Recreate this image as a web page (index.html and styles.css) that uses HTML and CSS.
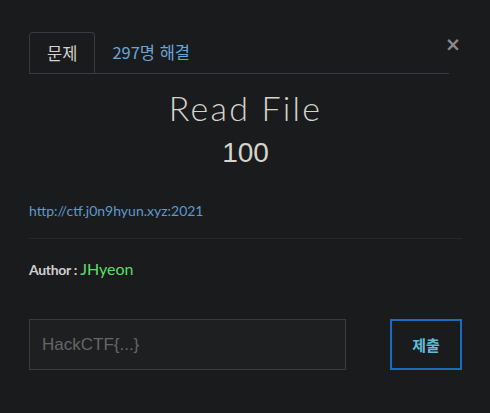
FILE: index.html
```html
<!DOCTYPE html>
<html lang="ko">
<head>
  <meta charset="UTF-8">
  <title>Read File</title>
  <link rel="stylesheet" href="styles.css">
</head>
<body>
  <div class="modal">
    <button class="close" type="button">&times;</button>
    <div class="tabs">
      <div class="tab active">문제</div>
      <div class="tab solves">297명 해결</div>
    </div>
    <h2 class="title">Read File</h2>
    <h3 class="value">100</h3>
    <div class="desc">
      <a href="#" class="link">http://ctf.j0n9hyun.xyz:2021</a>
    </div>
    <hr class="line">
    <div class="author">Author : <span class="name">JHyeon</span></div>
    <form class="submit-row">
      <input class="flag" type="text" placeholder="HackCTF{...}">
      <button class="btn" type="button">제출</button>
    </form>
  </div>
</body>
</html>
```

FILE: styles.css
```css
body {
  margin: 0;
  background-color: #1a1b1d;
  font-family: Lato, "Noto Sans CJK KR", sans-serif;
  color: #d0cdc6;
}
.modal {
  position: relative;
  padding: 32px 28px 0 29px;
}
.close {
  position: absolute;
  top: 35px;
  right: 29px;
  background: none;
  border: none;
  padding: 0;
  color: #8a8a8a;
  font-family: "DejaVu Sans", sans-serif;
  font-weight: bold;
  font-size: 19px;
  line-height: 19px;
}
.tabs {
  display: flex;
  margin-right: 13px;
  border-bottom: 1px solid #353c44;
  height: 41px;
}
.tab {
  font-family: "Noto Sans CJK KR", sans-serif;
  font-size: 16.5px;
  line-height: 40px;
  padding: 0 17px;
}
.tab.active {
  border: 1px solid #353c44;
  border-bottom: none;
  border-radius: 4px 4px 0 0;
  color: #d6d3cc;
  height: 40px;
}
.tab.solves {
  color: #6aa5d8;
}
.title {
  margin: 14px 0 0;
  text-align: center;
  font-family: Lato, sans-serif;
  font-weight: 300;
  font-size: 34px;
  letter-spacing: 2.2px;
  line-height: 40px;
  color: #d6d3cc;
}
.value {
  margin: 8px 0 0;
  text-align: center;
  font-family: "Liberation Sans", sans-serif;
  font-weight: normal;
  font-size: 28px;
  line-height: 34px;
  color: #d6d3cc;
}
.desc {
  margin-top: 31px;
  font-size: 14px;
  line-height: 20px;
}
.link {
  color: #5d9acd;
  text-decoration: none;
}
.line {
  margin: 17px 0 0;
  border: none;
  border-top: 1px solid #25272a;
}
.author {
  margin-top: 20px;
  font-size: 14px;
  line-height: 20px;
  font-weight: bold;
  color: #cfcfcf;
  letter-spacing: -0.3px;
}
.name {
  font-weight: normal;
  color: #5fdc6a;
  font-size: 16px;
  letter-spacing: 0;
}
.submit-row {
  display: flex;
  justify-content: space-between;
  margin-top: 39px;
}
.flag {
  width: 317px;
  height: 51px;
  box-sizing: border-box;
  background: #1e1f21;
  border: 1px solid #383d43;
  padding: 0 12px;
  font-family: "Liberation Sans", sans-serif;
  font-size: 17px;
  color: #ccc;
}
.flag::placeholder {
  color: #666;
}
.btn {
  width: 72px;
  height: 51px;
  box-sizing: border-box;
  background: transparent;
  border: 2px solid #1a6cc0;
  color: #5bc0d8;
  font-family: "Noto Sans CJK KR", sans-serif;
  font-weight: bold;
  font-size: 15px;
}
```
